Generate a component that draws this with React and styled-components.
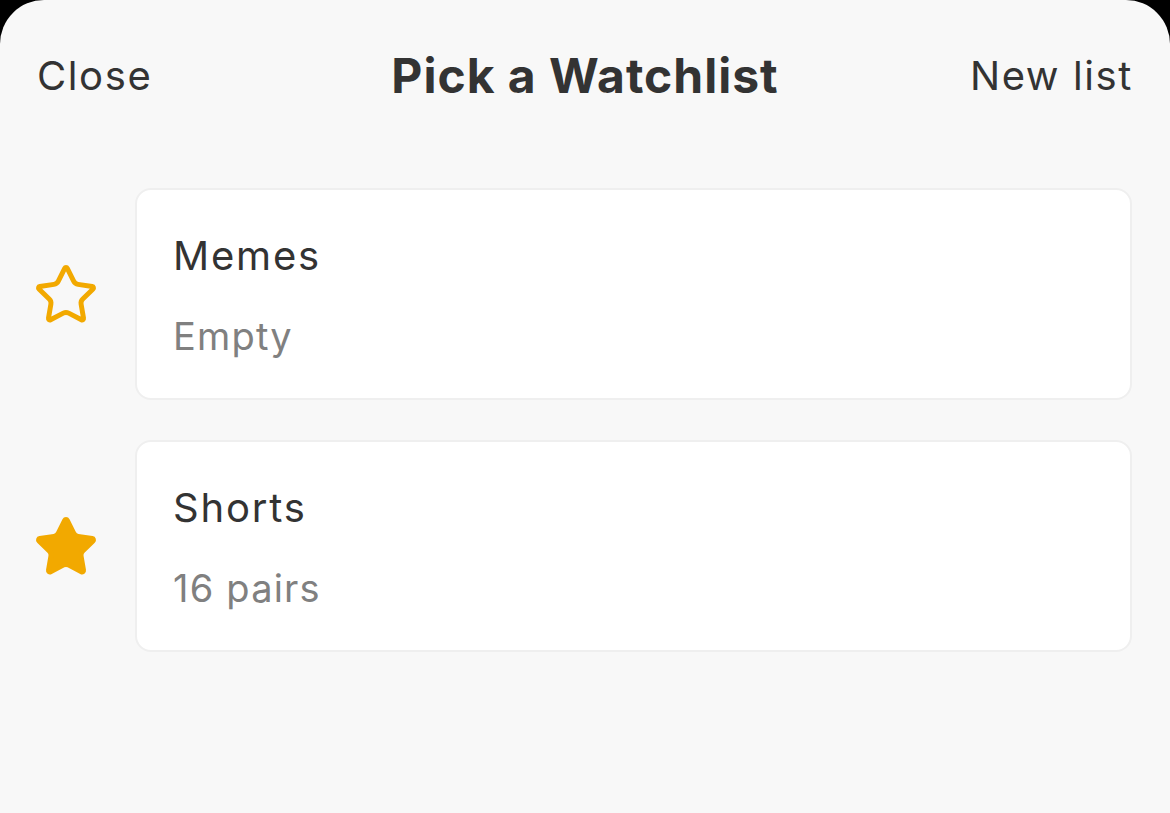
import React from 'react'
import styled, { createGlobalStyle } from 'styled-components'

const GlobalStyle = createGlobalStyle`
    html, body {
        margin: 0;
        padding: 0;
        background: #000;
    }
    * {
        box-sizing: border-box;
    }
`

const Sheet = styled.div`
    min-height: 100vh;
    background: #f8f8f8;
    border-radius: 44px 44px 0 0;
    font-family: "Inter", "Noto Sans", sans-serif;
    color: #333333;
`

const Header = styled.div`
    height: 150px;
    display: grid;
    grid-template-columns: 1fr auto 1fr;
    align-items: center;
    padding: 0 37px;
`

const HeaderLink = styled.button`
    background: none;
    border: 0;
    padding: 0;
    font-family: inherit;
    font-size: 40px;
    letter-spacing: 1.6px;
    color: #333333;
    cursor: pointer;
    justify-self: ${(p) => (p.$right ? 'end' : 'start')};
`

const Title = styled.h1`
    margin: 0;
    font-size: 48px;
    font-weight: 700;
    letter-spacing: 1px;
    color: #333333;
`

const List = styled.div`
    display: flex;
    flex-direction: column;
    gap: 40px;
    padding: 38px 38px 0 0;
`

const Row = styled.div`
    display: flex;
    align-items: center;
`

const StarCell = styled.div`
    width: 135px;
    flex-shrink: 0;
    display: flex;
    justify-content: center;
    align-items: center;
    padding: 2px 4px 0 0;
`

const Card = styled.div`
    flex: 1;
    background: #ffffff;
    border: 2px solid #efefef;
    border-radius: 16px;
    padding: 41px 36px 37px;
    display: flex;
    flex-direction: column;
    gap: 30px;
`

const CardTitle = styled.div`
    font-size: 40px;
    line-height: 50px;
    letter-spacing: 1.8px;
    color: #333333;
`

const CardSub = styled.div`
    font-size: 38px;
    line-height: 50px;
    letter-spacing: 1.2px;
    color: #808080;
`

function Star({ filled }) {
    return (
        <svg width="66" height="66" viewBox="0 0 24 24" fill={filled ? '#f2a900' : 'none'} stroke="#f2a900" strokeWidth="1.8" strokeLinejoin="round" strokeLinecap="round">
            <path d="M11.525 2.295a.53.53 0 0 1 .95 0l2.31 4.679a2.123 2.123 0 0 0 1.595 1.16l5.166.756a.53.53 0 0 1 .294.904l-3.736 3.638a2.123 2.123 0 0 0-.611 1.878l.882 5.14a.53.53 0 0 1-.771.56l-4.618-2.428a2.122 2.122 0 0 0-1.973 0L6.396 21.01a.53.53 0 0 1-.77-.56l.881-5.139a2.122 2.122 0 0 0-.611-1.879L2.16 9.795a.53.53 0 0 1 .294-.906l5.165-.755a2.122 2.122 0 0 0 1.597-1.16z" />
        </svg>
    )
}

const lists = [
    { name: 'Memes', info: 'Empty', fav: false },
    { name: 'Shorts', info: '16 pairs', fav: true },
]

export default function App() {
    return (
        <>
            <GlobalStyle />
            <Sheet>
                <Header>
                    <HeaderLink>Close</HeaderLink>
                    <Title>Pick a Watchlist</Title>
                    <HeaderLink $right>New list</HeaderLink>
                </Header>
                <List>
                    {lists.map((l) => (
                        <Row key={l.name}>
                            <StarCell>
                                <Star filled={l.fav} />
                            </StarCell>
                            <Card>
                                <CardTitle>{l.name}</CardTitle>
                                <CardSub>{l.info}</CardSub>
                            </Card>
                        </Row>
                    ))}
                </List>
            </Sheet>
        </>
    )
}
